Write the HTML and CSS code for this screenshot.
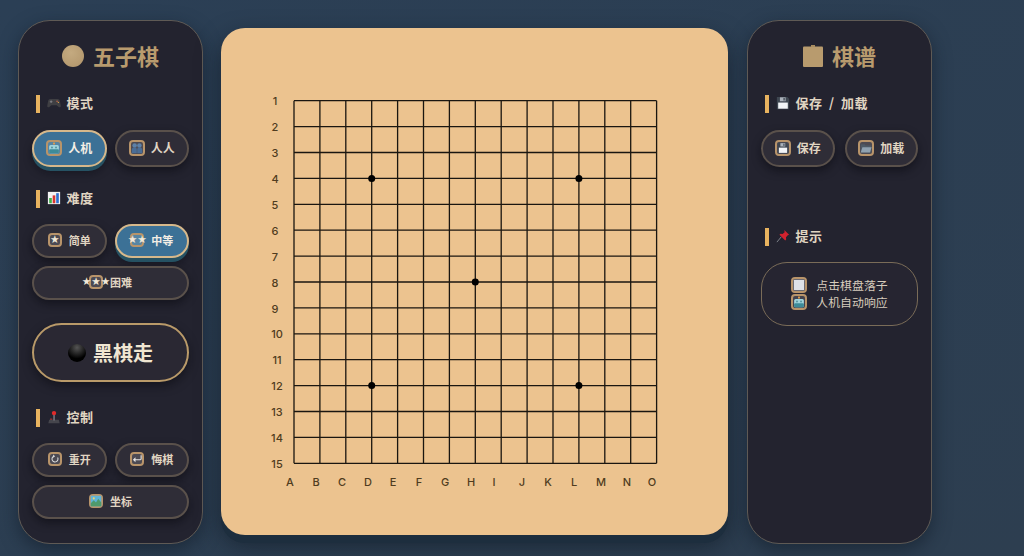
FILE: index.html
```html
<!DOCTYPE html>
<html lang="zh">
<head>
<meta charset="utf-8">
<title>五子棋</title>
<link rel="stylesheet" href="styles.css">
</head>
<body>
<svg class="defs" width="0" height="0" aria-hidden="true">
  <defs>
    <symbol id="i-pad" viewBox="0 0 16 16">
      <path d="M4 3.500h8c1.600 0 2.400 1 2.800 2.600l.9 5c.3 1.700-1.600 2.500-2.700 1.300L11 10.500H5l-2 1.900c-1.100 1.200-3 .4-2.700-1.300l.9-5C1.600 4.500 2.400 3.500 4 3.500z" fill="#3f3f43"/>
      <circle cx="11.500" cy="6" r=".8" fill="#d9694a"/><circle cx="13" cy="7.300" r=".7" fill="#d9a04a"/>
      <path d="M3.200 6.500h3M4.700 5v3" stroke="#85858a" stroke-width="1"/>
    </symbol>
    <symbol id="i-chart" viewBox="0 0 16 16">
      <rect x="1" y="1" width="14" height="14" fill="#f3f3f3"/>
      <rect x="2.500" y="8" width="3" height="6" fill="#3fae49"/><rect x="6.500" y="5" width="3" height="9" fill="#d8352f"/><rect x="10.500" y="2.500" width="3" height="11.500" fill="#2d6fd0"/>
    </symbol>
    <symbol id="i-joy" viewBox="0 0 16 16">
      <path d="M2.500 11h11l1 4h-13z" fill="#45454c"/><rect x="7.300" y="5" width="1.500" height="7" fill="#85858d"/><circle cx="8" cy="3.500" r="2.500" fill="#e02b2b"/><rect x="3.500" y="9.800" width="2.500" height="1.300" fill="#b23030"/>
    </symbol>
    <symbol id="i-disk" viewBox="0 0 16 16">
      <path d="M1 1h12l2 2v12H1z" fill="#3e4650"/><rect x="2.500" y="7.500" width="11" height="7" fill="#f2f4f7"/><rect x="4.500" y="1.500" width="6.500" height="4.500" fill="#aab1ba"/><rect x="8.500" y="2.200" width="1.500" height="3" fill="#3e4650"/>
    </symbol>
    <symbol id="i-pin" viewBox="0 0 16 16">
      <path d="M1 15l5-6" stroke="#8a8f96" stroke-width="1"/>
      <path d="M9.500 1l5.500 5.500-1.600.6-2 2.400.2 2.500-1.100 1-6.500-6.500 1-1.100 2.500.2 2.400-2z" fill="#d3222e"/>
    </symbol>
    <symbol id="i-robot" viewBox="0 0 16 16">
      <rect x="7.300" y="1" width="1.400" height="3" fill="#c98a55"/><circle cx="8" cy="1.800" r="1.300" fill="#e2a14f"/>
      <rect x="1.500" y="4" width="13" height="11" rx="2" fill="#9fd4dc"/><rect x="1.500" y="9.500" width="13" height="5.500" rx="1.500" fill="#3e8b98"/>
      <circle cx="5.300" cy="7.300" r="1.200" fill="#4f8d9a"/><circle cx="10.700" cy="7.300" r="1.200" fill="#4f8d9a"/>
    </symbol>
    <symbol id="i-people" viewBox="0 0 16 16">
      <circle cx="4.800" cy="4.500" r="3" fill="#5d81a8"/><circle cx="11.200" cy="4.500" r="3" fill="#5d81a8"/>
      <path d="M1 15V10c0-2 1.700-2.800 3.800-2.800S7.700 8 7.700 10v5zM8.300 15V10c0-2 .9-2.800 2.900-2.800S15 8 15 10v5z" fill="#4a6d96"/>
    </symbol>
    <symbol id="i-refresh" viewBox="0 0 16 16">
      <path d="M11.500 6A4 4 0 1 1 6.500 4.200" fill="none" stroke="#ddd" stroke-width="1.400"/><path d="M5.500 2l2.600 2.300-2.600 2z" fill="#ddd"/>
    </symbol>
    <symbol id="i-return" viewBox="0 0 16 16">
      <path d="M13.500 3v4.500c0 1-.6 1.500-1.500 1.500H4" fill="none" stroke="#e6e6e6" stroke-width="1.500"/><path d="M6 5.800L2.500 9 6 12.200z" fill="#e6e6e6"/>
    </symbol>
    <symbol id="i-map" viewBox="0 0 16 16">
      <rect x="1" y="1" width="14" height="14" fill="#5fb4d8"/><path d="M1 11l4-4 3 3 3-5 4 5v5H1z" fill="#4e9a6c"/><circle cx="5" cy="4.500" r="1.400" fill="#f1d66a"/>
    </symbol>
    <symbol id="i-folder" viewBox="0 0 16 16">
      <path d="M1 3h5l1.500 1.500H15V14H1z" fill="#4e5a66"/><path d="M3.200 7H15.500l-2.200 7H1z" fill="#8fa1b0"/>
    </symbol>
    <symbol id="i-sheet" viewBox="0 0 16 16">
      <rect x="1" y="1" width="14" height="14" rx="1" fill="#dfe2e8"/>
    </symbol>
  </defs>
</svg>

<main class="layout">
  <aside class="panel">
    <h1 class="title"><span class="title-stone"></span>五子棋</h1>

    <h2 class="head"><svg class="head-icon"><use href="#i-pad"/></svg>模式</h2>
    <div class="btn-grid">
      <button class="btn btn-tall active"><span class="frame"><svg><use href="#i-robot"/></svg></span>人机</button>
      <button class="btn btn-tall"><span class="frame"><svg><use href="#i-people"/></svg></span>人人</button>
    </div>

    <h2 class="head head-next"><svg class="head-icon"><use href="#i-chart"/></svg>难度</h2>
    <div class="btn-grid">
      <button class="btn small"><span class="frame star">★</span>简单</button>
      <button class="btn small active"><span class="frame star">★★</span>中等</button>
      <button class="btn small wide"><span class="frame star">★★★</span>困难</button>
    </div>

    <div class="status"><span class="stone"></span>黑棋走</div>

    <h2 class="head head-control"><svg class="head-icon"><use href="#i-joy"/></svg>控制</h2>
    <div class="btn-grid">
      <button class="btn small"><span class="frame"><svg><use href="#i-refresh"/></svg></span>重开</button>
      <button class="btn small"><span class="frame"><svg><use href="#i-return"/></svg></span>悔棋</button>
      <button class="btn small wide"><span class="frame"><svg><use href="#i-map"/></svg></span>坐标</button>
    </div>
  </aside>

  <section class="board">
    <svg class="board-svg" viewBox="0 -0.7 507 507" role="img" aria-label="棋盘">
      <path class="grid" d="M73 72V434.600M98.900 72V434.600M124.800 72V434.600M150.700 72V434.600M176.600 72V434.600M202.500 72V434.600M228.400 72V434.600M254.300 72V434.600M280.200 72V434.600M306.100 72V434.600M332 72V434.600M357.900 72V434.600M383.800 72V434.600M409.700 72V434.600M435.600 72V434.600M73 72H435.600M73 97.900H435.600M73 123.800H435.600M73 149.700H435.600M73 175.600H435.600M73 201.500H435.600M73 227.400H435.600M73 253.300H435.600M73 279.200H435.600M73 305.100H435.600M73 331H435.600M73 356.900H435.600M73 382.800H435.600M73 408.700H435.600M73 434.600H435.600"/>
      <circle cx="150.700" cy="149.700" r="3.500"/><circle cx="357.900" cy="149.700" r="3.500"/><circle cx="254.300" cy="253.300" r="3.500"/><circle cx="150.700" cy="356.900" r="3.500"/><circle cx="357.900" cy="356.900" r="3.500"/>
      <g class="labels" transform="translate(0 -0.9)">
        <text x="54" y="77">1</text><text x="54" y="103">2</text><text x="54" y="129">3</text><text x="54" y="155">4</text><text x="54" y="181">5</text><text x="54" y="207">6</text><text x="54" y="233">7</text><text x="54" y="259">8</text><text x="54" y="285">9</text><text x="56" y="310">10</text><text x="56" y="336">11</text><text x="56" y="362">12</text><text x="56" y="388">13</text><text x="56" y="414">14</text><text x="56" y="440">15</text>
        <text x="69" y="458">A</text><text x="95" y="458">B</text><text x="121" y="458">C</text><text x="147" y="458">D</text><text x="172" y="458">E</text><text x="198" y="458">F</text><text x="224" y="458">G</text><text x="250" y="458">H</text><text x="273" y="458">I</text><text x="301" y="458">J</text><text x="327" y="458">K</text><text x="353" y="458">L</text><text x="380" y="458">M</text><text x="406" y="458">N</text><text x="431" y="458">O</text>
      </g>
    </svg>
  </section>

  <aside class="panel">
    <h1 class="title"><svg class="title-clip" viewBox="0 0 20 22"><rect y="1.500" width="20" height="20.500" rx="1" fill="#b89b6e"/><rect x="8" width="4" height="2" fill="#a88c60"/></svg>棋谱</h1>

    <h2 class="head"><svg class="head-icon"><use href="#i-disk"/></svg>保存 / 加载</h2>
    <div class="btn-grid btn-grid-roomy">
      <button class="btn btn-tall"><span class="frame"><svg><use href="#i-disk"/></svg></span>保存</button>
      <button class="btn btn-tall"><span class="frame"><svg><use href="#i-folder"/></svg></span>加载</button>
    </div>

    <h2 class="head head-hint"><svg class="head-icon"><use href="#i-pin"/></svg>提示</h2>
    <div class="hint">
      <p class="hint-line"><span class="frame"><svg><use href="#i-sheet"/></svg></span>点击棋盘落子</p>
      <p class="hint-line"><span class="frame"><svg><use href="#i-robot"/></svg></span>人机自动响应</p>
    </div>
  </aside>
</main>
</body>
</html>
```

FILE: styles.css
```css
* { box-sizing: border-box; }
html, body { margin: 0; height: 100%; }
body {
  background: #2c3e50;
  background-image: linear-gradient(160deg, #2b3f55 0%, #2d3e50 100%);
  font-family: "Noto Sans CJK SC", "Noto Sans", sans-serif;
  overflow: hidden;
}
.defs { position: absolute; }
.layout {
  display: flex;
  align-items: flex-start;
  gap: 18px;
  height: 556px;
  padding: 20px 18px 12px;
}
.panel {
  flex: 0 0 185px;
  height: 524px;
  padding: 21px 13px 0;
  background: #23232f;
  border: 1px solid #5f5a55;
  border-radius: 32px;
  box-shadow: 0 6px 18px rgba(15, 25, 38, .55);
}
.title {
  display: flex;
  align-items: center;
  justify-content: center;
  gap: 9px;
  height: 26px;
  margin: 0 0 27px;
  color: #b89b6e;
  font-size: 22px;
  font-weight: 700;
  line-height: 26px;
}
.title-stone {
  width: 22px;
  height: 22px;
  margin-top: 2px;
  border-radius: 50%;
  background: radial-gradient(circle at 40% 35%, #c4aa80, #b0946a);
}
.title-clip { width: 20px; height: 22px; margin-top: 2px; }
.head {
  display: flex;
  align-items: center;
  height: 18px;
  margin: 0 0 17px 3.500px;
  padding-left: 7px;
  padding-bottom: 2px;
  border-left: 4px solid #e8b35f;
  color: #e0d5c2;
  font-size: 13px;
  font-weight: 700;
  letter-spacing: .5px;
  word-spacing: 3px;
  line-height: 18px;
}
.head-icon { width: 14px; height: 14px; margin-right: 6px; }
.head-next { margin-top: 23px; margin-bottom: 16px; }
.head-control { margin-bottom: 16px; }
.head-hint { margin-top: 61px; margin-bottom: 16px; }
.btn-grid {
  display: grid;
  grid-template-columns: 1fr 1fr;
  gap: 8px;
}
.btn-grid-roomy { column-gap: 10px; }
.btn {
  display: flex;
  align-items: center;
  justify-content: center;
  gap: 7px;
  height: 34px;
  padding: 0 0 2px;
  background: #2f2d37;
  border: 2px solid #5a514b;
  border-radius: 18px;
  box-shadow: 0 4px 8px rgba(8, 8, 14, .5);
  color: #e0d5c2;
  font-family: inherit;
  font-size: 11px;
  font-weight: 700;
}
.btn-tall { gap: 6px; height: 37px; font-size: 12px; border-radius: 19px; }
.btn.active {
  background: #3c7196;
  border: 2px solid #d6b88b;
  color: #f3eee5;
  box-shadow: 0 4px 0 #265263, 0 6px 8px rgba(8, 8, 14, .4);
}
.wide { grid-column: 1 / 3; }
.frame {
  display: inline-flex;
  align-items: center;
  justify-content: center;
  flex: none;
  width: 14px;
  height: 14px;
  padding: 0;
  background: rgba(255, 255, 255, .14);
  border: 2px solid #b8946a;
  border-radius: 4px;
}
.btn-tall .frame, .hint-line .frame { width: 16px; height: 16px; }
.frame svg { flex: none; width: 12px; height: 12px; }
.star { color: #f1e8d8; font-family: "DejaVu Sans", sans-serif; font-size: 10.700px; font-weight: 400; line-height: 1; white-space: nowrap; }
.status {
  display: flex;
  align-items: center;
  justify-content: center;
  gap: 7px;
  height: 59px;
  margin: 23px 0 27px;
  background: #2a2833;
  border: 2px solid #b99a69;
  border-radius: 30px;
  box-shadow: 0 4px 10px rgba(8, 8, 14, .5);
  color: #f0e6d2;
  font-size: 20px;
  font-weight: 700;
}
.stone {
  width: 18px;
  height: 18px;
  border-radius: 50%;
  background: radial-gradient(circle at 50% 20%, #555, #000 65%);
}
.board {
  flex: 0 0 507px;
  height: 507px;
  margin: 8px 1px 0 0;
  background: #ecc38f;
  border-radius: 24px;
  box-shadow: 0 8px 0 #1d2e3e, 0 10px 24px rgba(12, 20, 30, .6);
}
.board-svg { display: block; width: 507px; height: 507px; }
.grid { fill: none; stroke: #1a1610; stroke-width: 1.300; }
.labels text {
  fill: #4f3c20;
  font-family: "Inter", "Liberation Sans", sans-serif;
  font-size: 11px;
  font-weight: 500;
  text-anchor: middle;
}
.hint {
  display: flex;
  flex-direction: column;
  justify-content: center;
  height: 64px;
  padding-bottom: 2px;
  background: #262531;
  border: 1px solid #7a6c58;
  border-radius: 26px;
}
.hint-line {
  display: flex;
  align-items: center;
  justify-content: center;
  gap: 9px;
  height: 17px;
  margin: 0;
  color: #d6ccbc;
  font-size: 11.900px;
}
```
